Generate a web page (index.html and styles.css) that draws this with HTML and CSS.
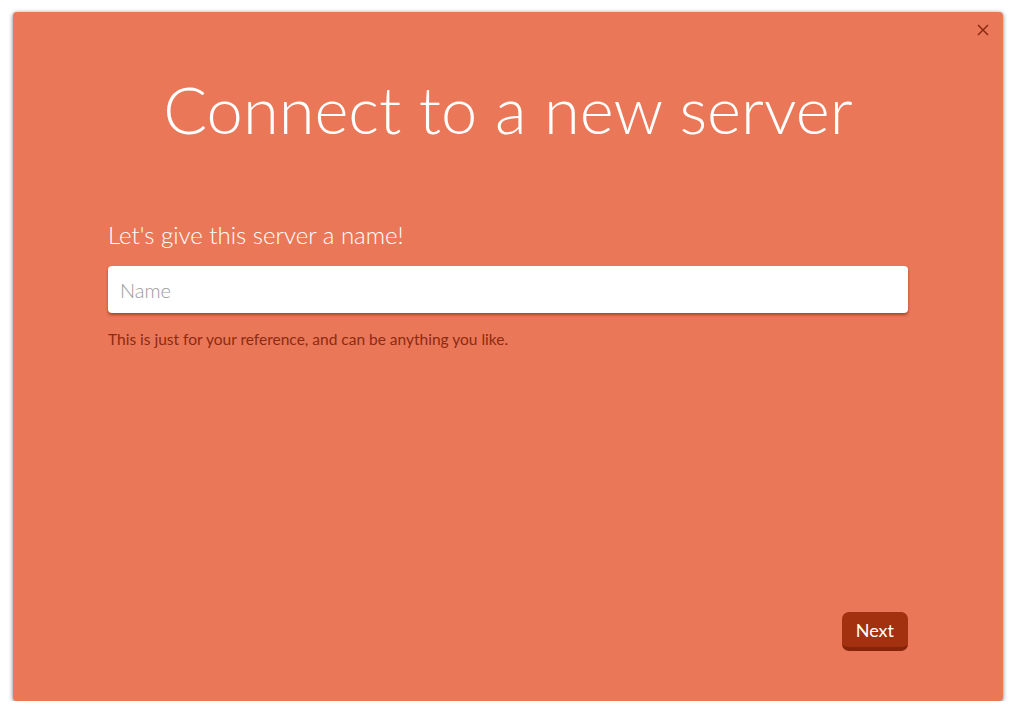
FILE: index.html
```html
<!DOCTYPE html>
<html lang="en">
<head>
  <meta charset="UTF-8">
  <meta name="viewport" content="width=device-width, initial-scale=1.0">
  <title>Connect to a new server</title>
  <link rel="stylesheet" href="styles.css">
</head>
<body>

  <div class="modal">
      <button class="close-button" aria-label="Close">
          <svg width="12" height="12" viewBox="0 0 12 12">
              <path d="M1 1 L11 11 M11 1 L1 11" stroke="#8a2a10" stroke-width="1.5" fill="none"/>
          </svg>
      </button>

      <h1 class="modal-title">Connect to a new server</h1>

      <div class="modal-body">
          <label class="field-label" for="serverName">Let's give this server a name!</label>
          <input class="field-input" id="serverName" type="text" placeholder="Name">
          <p class="field-help">This is just for your reference, and can be anything you like.</p>
      </div>

      <div class="modal-actions">
          <button class="next-button">Next</button>
      </div>
  </div>

</body>
</html>
```

FILE: styles.css
```css
body {
    margin: 0;
    background-color: white;
    font-family: Lato, "Open Sans", sans-serif;
}

.modal {
    position: relative;
    margin: 12px 12px 0 13px;
    height: 689px;
    background-color: #ea7858;
    border-radius: 4px;
    box-shadow: 0 1px 4px rgba(0, 0, 0, 0.55);
    display: flex;
    flex-direction: column;
    align-items: center;
}

.close-button {
    position: absolute;
    top: 8px;
    right: 10px;
    width: 20px;
    height: 20px;
    padding: 0;
    border: none;
    background: none;
    display: flex;
    align-items: center;
    justify-content: center;
    cursor: pointer;
}

.modal-title {
    margin: 54px 0 0;
    font-size: 65px;
    font-weight: 300;
    line-height: 86px;
    color: white;
}

.modal-body {
    width: 800px;
    margin-top: 68px;
    display: flex;
    flex-direction: column;
}

.field-label {
    font-size: 24px;
    font-weight: 300;
    color: white;
    line-height: 30px;
}

.field-input {
    margin-top: 16px;
    height: 47px;
    box-sizing: border-box;
    padding: 0 12px;
    border: none;
    border-radius: 4px;
    background-color: white;
    box-shadow: 0 2px 3px rgba(110, 30, 10, 0.55);
    font-family: Lato, sans-serif;
    font-size: 20px;
    font-weight: 300;
    outline: none;
}

.field-input::placeholder {
    color: #9a9a9a;
}

.field-help {
    margin: 17px 0 0;
    font-size: 15.5px;
    color: #8c2a12;
}

.modal-actions {
    width: 800px;
    margin-top: auto;
    margin-bottom: 50px;
    display: flex;
    justify-content: flex-end;
}

.next-button {
    height: 39px;
    padding: 0 14px;
    border: none;
    border-bottom: 4px solid #862409;
    border-radius: 7px;
    background-color: #a3300f;
    color: white;
    font-family: Lato, sans-serif;
    font-size: 18px;
    cursor: pointer;
}

.next-button:hover {
    opacity: 0.9;
}
```
